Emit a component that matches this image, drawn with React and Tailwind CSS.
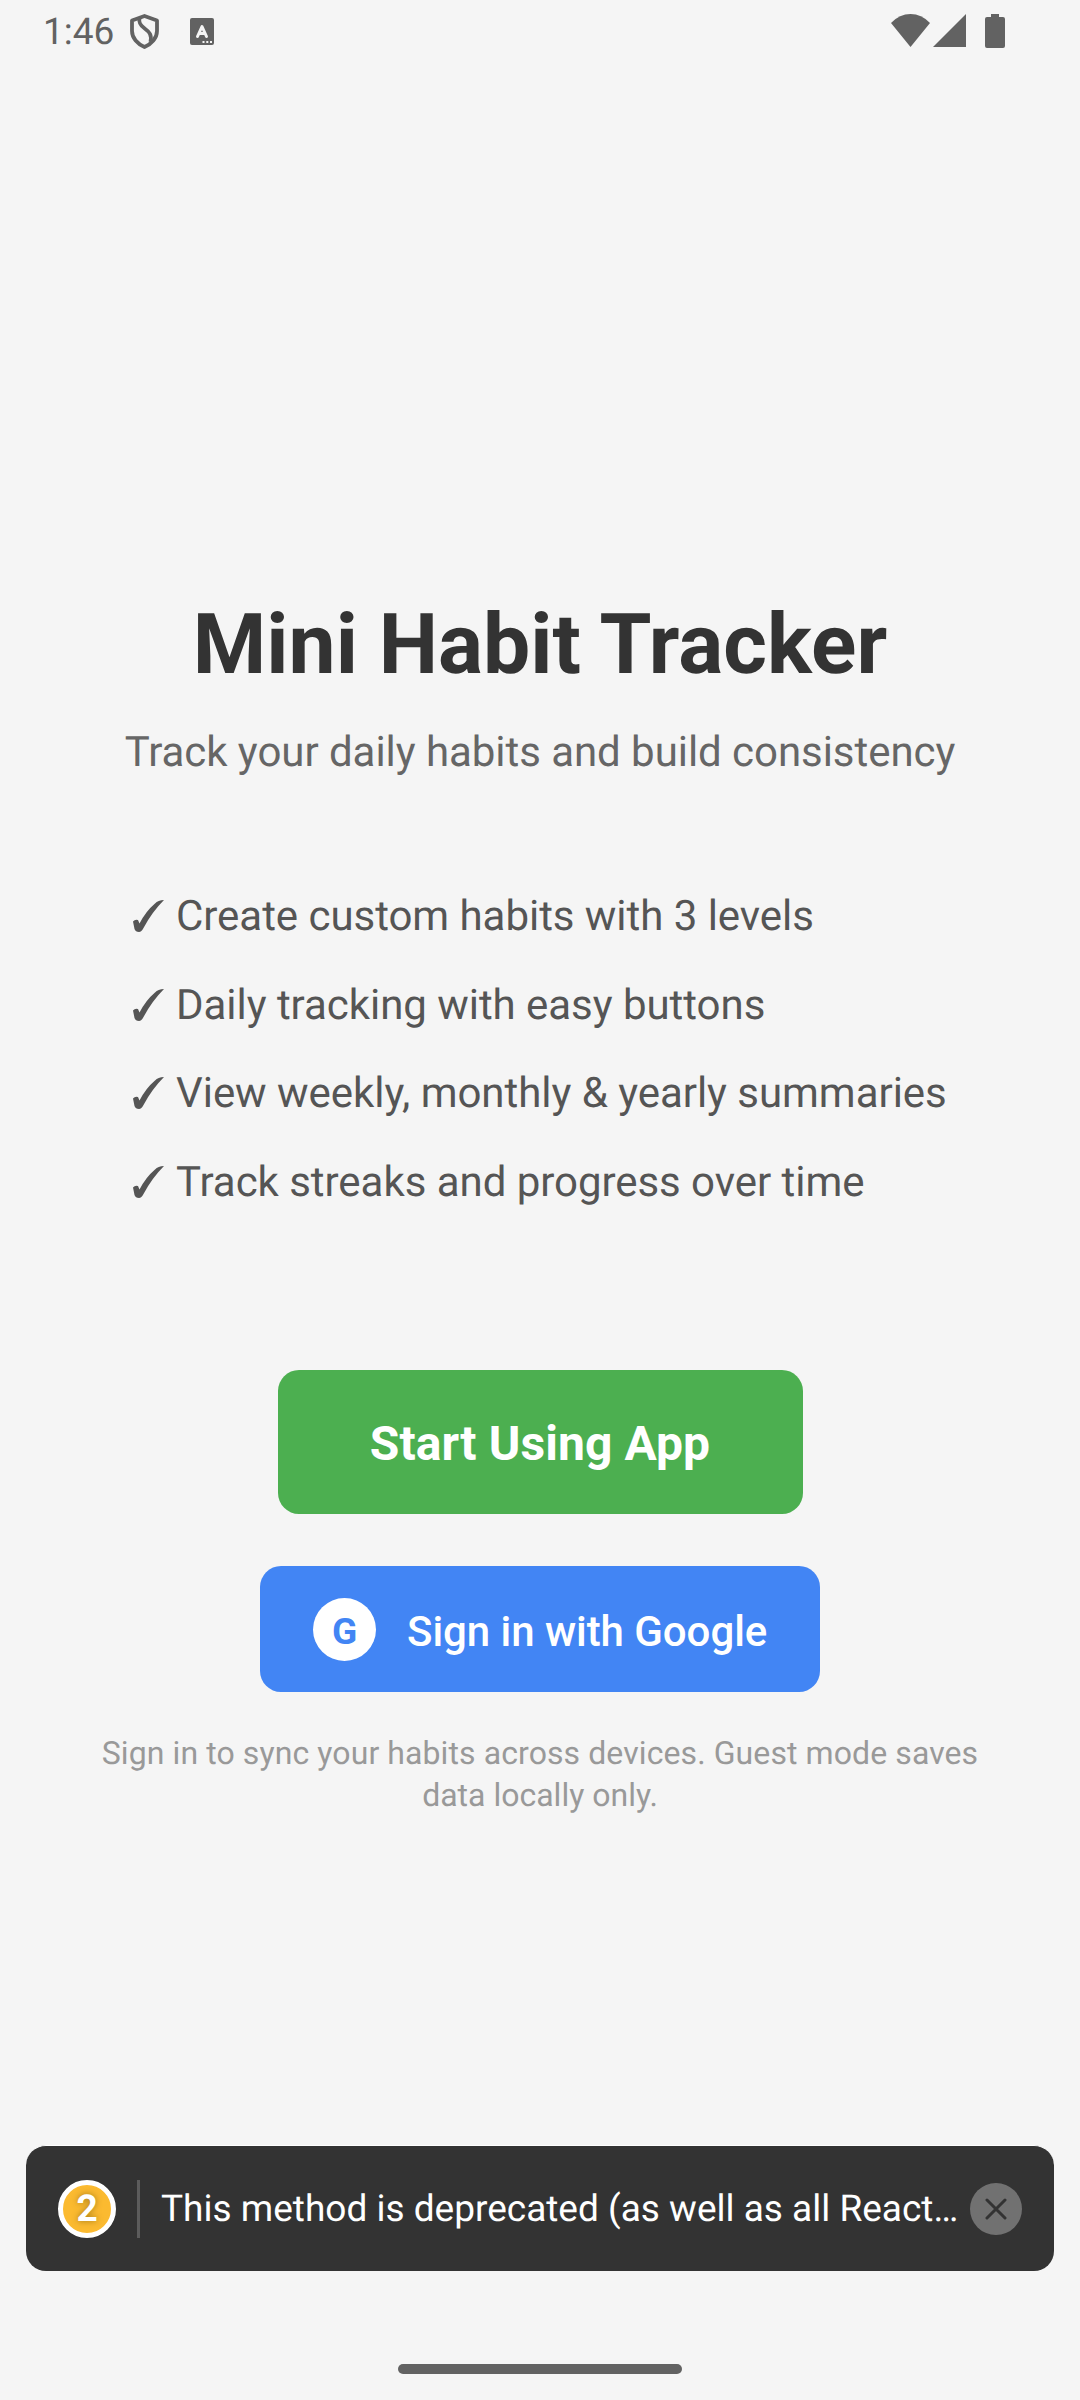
const features = [
  "Create custom habits with 3 levels",
  "Daily tracking with easy buttons",
  "View weekly, monthly & yearly summaries",
  "Track streaks and progress over time",
];

function StatusBar() {
  return (
    <header className="flex h-[64px] w-full items-start pt-[10px] pr-[75px] pl-[43px] text-[#626262]">
      <span className="mt-[1px] w-[87px] text-[37px] leading-[43px]">1:46</span>
      <svg className="mt-[4px] h-[35px] w-[29px]" viewBox="0 0 29 35" fill="none" stroke="currentColor" strokeWidth="3.8" strokeLinejoin="round">
        <path d="M14.5 2 L27 6.5 V17 C27 24 21.5 30 14.5 33 C7.5 30 2 24 2 17 V6.5 Z" />
        <path d="M9.5 4 C8.5 9 10.5 11.5 14.7 14.5 C19.5 18 22 21 20.5 28" />
      </svg>
      <svg className="mt-[8px] ml-[31px] h-[27px] w-[24px]" viewBox="0 0 24 27">
        <rect width="24" height="27" rx="2" fill="currentColor" />
        <path d="M7.5 18.5 L12 8.5 L16.5 18.5 M9 15.5 H15" fill="none" stroke="#f5f5f5" strokeWidth="3" strokeLinecap="round" strokeLinejoin="round" />
        <path d="M12.5 23 h2 v2 h-2z M16.3 23 h2 v2 h-2z M20 23 h2 v2 h-2z" fill="#f5f5f5" />
      </svg>
      <svg className="mt-[4px] ml-auto h-[33px] w-[39px]" viewBox="0 0 39 33" fill="currentColor">
        <path d="M0 9 Q8.5 0 19.5 0 Q30.5 0 39 9 L19.5 33 Z" />
      </svg>
      <svg className="mt-[4px] ml-[3px] h-[33px] w-[33px]" viewBox="0 0 33 33" fill="currentColor">
        <path d="M33 0 V33 H0 Z" />
      </svg>
      <svg className="mt-[4px] ml-[19px] h-[34px] w-[20px]" viewBox="0 0 20 34" fill="currentColor">
        <path d="M6 0 H14 V3 H18 Q20 3 20 5 V32 Q20 34 18 34 H2 Q0 34 0 32 V5 Q0 3 2 3 H6 Z" />
      </svg>
    </header>
  );
}

function Check() {
  return (
    <svg className="mt-[8px] mr-[10px] ml-[3px] h-[32px] w-[33px]" viewBox="0 0 33 32" fill="currentColor" role="img" aria-label="✓">
      <path d="M0 21.5 Q2 19 5 20 L6.5 23.5 Q13 11 22 3.5 Q25 0 31 0 Q19 12 10.5 28 Q8.5 32 6 32 Q2.5 32 1.5 29 Z" />
    </svg>
  );
}

function Toast() {
  return (
    <div className="mt-[329px] h-[126px] w-[1028px] overflow-hidden rounded-[20px] border-t border-white bg-[#333]">
      <div className="flex h-[125px] items-start pt-[34px] pl-[32px] text-white">
        <div className="h-[58px] w-[58px] shrink-0 rounded-full border-[5px] border-white bg-[#fbba30] text-center text-[37px] leading-[49px] font-bold [text-shadow:0_0_6px_rgba(80,60,0,0.5)]">2</div>
        <div className="ml-[21px] h-[58px] w-[3px] shrink-0 bg-[#5c5c5c]" />
        <p className="mt-[8px] ml-[21px] w-[796px] shrink-0 text-[37px] leading-[43px] whitespace-nowrap">This method is deprecated (as well as all React…</p>
        <button className="mt-[3px] ml-[13px] flex h-[52px] w-[52px] shrink-0 items-center justify-center rounded-full bg-[#717171]">
          <svg className="h-[22px] w-[22px]" viewBox="0 0 22 22" fill="none" stroke="#333" strokeWidth="3" strokeLinecap="round">
            <path d="M2 2 L20 20 M20 2 L2 20" />
          </svg>
        </button>
      </div>
    </div>
  );
}

export default function App() {
  return (
    <div className="flex h-[2400px] w-[1080px] flex-col items-center overflow-hidden bg-[#f5f5f5] font-['Roboto',sans-serif] [text-rendering:geometricPrecision]">
      <StatusBar />
      <h1 className="mt-[531px] text-[84px] leading-[99px] font-bold text-[#333]">Mini Habit Tracker</h1>
      <p className="mt-[34px] text-[42px] leading-[49px] tracking-[-0.05px] text-[#666]">Track your daily habits and build consistency</p>
      <ul className="mt-[115px] flex h-[315px] w-[820px] flex-col gap-[39.6px] text-[42px] leading-[49px] tracking-[-0.04px] text-[#555]">
        {features.map((f) => (
          <li key={f} className="flex h-[49px] shrink-0 whitespace-nowrap">
            <Check />
            <span>{f}</span>
          </li>
        ))}
      </ul>
      <button className="mt-[163px] flex h-[144px] w-[525px] shrink-0 items-start justify-center rounded-[21px] bg-[#4caf50] pt-[46px] text-[48px] leading-[56px] font-bold tracking-[0.08px] text-white">Start Using App</button>
      <button className="mt-[52px] flex h-[126px] w-[560px] shrink-0 items-start rounded-[21px] bg-[#4285f4] pt-[32px] pl-[53px] text-white">
        <span className="h-[63px] w-[63px] rounded-full bg-white pt-[12px] text-center text-[37px] leading-[43px] font-bold text-[#4285f4]">G</span>
        <span className="mt-[9px] ml-[31px] text-[42px] leading-[49px] font-medium tracking-[-0.05px]">Sign in with Google</span>
      </button>
      <p className="mt-[40px] text-center text-[32px] leading-[42px] text-[#999]">
        <span className="tracking-[0.09px]">Sign in to sync your habits across devices. Guest mode saves</span>
        <br />
        data locally only.
      </p>
      <Toast />
      <div className="mt-[93px] h-[10px] w-[284px] shrink-0 rounded-full bg-[#626262]" />
    </div>
  );
}
